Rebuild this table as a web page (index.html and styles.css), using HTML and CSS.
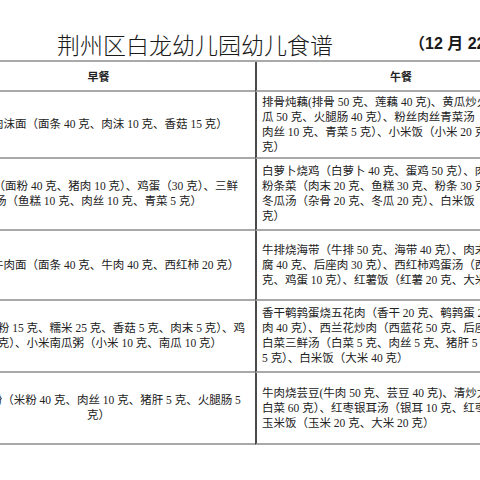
FILE: index.html
```html
<!DOCTYPE html>
<html lang="zh-CN">
<head>
<meta charset="utf-8">
<title>荆州区白龙幼儿园幼儿食谱</title>
<link rel="stylesheet" href="styles.css">
</head>
<body>
<div class="sheet">
  <div class="head">
    <span class="title">荆州区白龙幼儿园幼儿食谱</span>
    <span class="date">（12 月 22 日—12 月 26 日）</span>
  </div>
  <div class="menu">
    <div class="cell l th">早餐</div>
    <div class="cell r th">午餐</div>

    <div class="cell l">
      <span class="ln">香菇肉沫面（面条 40 克、肉沫 10 克、香菇 15 克）</span>
    </div>
    <div class="cell r">
      <span class="ln">排骨炖藕(排骨 50 克、莲藕 40 克)、黄瓜炒火腿肠（黄</span>
      <span class="ln">瓜 50 克、火腿肠 40 克）、粉丝肉丝青菜汤（粉丝 10 克、</span>
      <span class="ln">肉丝 10 克、青菜 5 克）、小米饭（小米 20 克、大米 20</span>
      <span class="ln">克）</span>
    </div>

    <div class="cell l">
      <span class="ln">鲜肉包（面粉 40 克、猪肉 10 克）、鸡蛋（30 克）、三鲜</span>
      <span class="ln">汤（鱼糕 10 克、肉丝 10 克、青菜 5 克）</span>
    </div>
    <div class="cell r">
      <span class="ln">白萝卜烧鸡（白萝卜 40 克、蛋鸡 50 克）、肉末</span>
      <span class="ln">粉条菜（肉末 20 克、鱼糕 30 克、粉条 30 克）、</span>
      <span class="ln">冬瓜汤（杂骨 20 克、冬瓜 20 克）、白米饭（大米 40</span>
      <span class="ln">克）</span>
    </div>

    <div class="cell l">
      <span class="ln">西红柿牛肉面（面条 40 克、牛肉 40 克、西红柿 20 克）</span>
    </div>
    <div class="cell r">
      <span class="ln">牛排烧海带（牛排 50 克、海带 40 克）、肉末豆</span>
      <span class="ln">腐 40 克、后座肉 30 克）、西红柿鸡蛋汤（西红柿 20</span>
      <span class="ln">克、鸡蛋 10 克）、红薯饭（红薯 20 克、大米 20 克）</span>
    </div>

    <div class="cell l">
      <span class="ln">烧麦（米粉 15 克、糯米 25 克、香菇 5 克、肉末 5 克）、鸡</span>
      <span class="ln">蛋 5 克）、小米南瓜粥（小米 10 克、南瓜 10 克）</span>
    </div>
    <div class="cell r">
      <span class="ln">香干鹌鹑蛋烧五花肉（香干 20 克、鹌鹑蛋 20 克、五花</span>
      <span class="ln">肉 40 克）、西兰花炒肉（西蓝花 50 克、后座肉 10 克）、</span>
      <span class="ln">白菜三鲜汤（白菜 5 克、肉丝 5 克、猪肝 5 克、虾皮</span>
      <span class="ln">5 克）、白米饭（大米 40 克）</span>
    </div>

    <div class="cell l">
      <span class="ln">猪肝米粉（米粉 40 克、肉丝 10 克、猪肝 5 克、火腿肠 5</span>
      <span class="ln">克）</span>
    </div>
    <div class="cell r">
      <span class="ln">牛肉烧芸豆(牛肉 50 克、芸豆 40 克)、清炒大白菜（大</span>
      <span class="ln">白菜 60 克）、红枣银耳汤（银耳 10 克、红枣 5 克）、</span>
      <span class="ln">玉米饭（玉米 20 克、大米 20 克）</span>
    </div>
  </div>
</div>
</body>
</html>
```
FILE: styles.css
```css
html, body {
  margin: 0;
  padding: 0;
  background: #ffffff;
}

.sheet {
  width: 480px;
  height: 480px;
  overflow: hidden;
  background: #ffffff;
  color: #222222;
  font-family: "Liberation Serif", "Noto Sans CJK SC", serif;
}

.head {
  height: 60px;
  box-sizing: border-box;
  padding-bottom: 2px;
  display: flex;
  align-items: flex-end;
  white-space: nowrap;
}

.title {
  margin-left: 57px;
  font-family: "Noto Sans CJK SC", sans-serif;
  font-weight: 300;
  font-size: 23px;
  line-height: 28px;
  color: #1a1a1a;
}

.date {
  margin-left: 76px;
  font-family: "Liberation Sans", "Noto Sans CJK SC", sans-serif;
  font-weight: bold;
  font-size: 16px;
  line-height: 28px;
  color: #1a1a1a;
}

.menu {
  display: grid;
  grid-template-columns: 313px 290px;
  grid-template-rows: 30px 67px 72px 70px 72px 72px;
  width: 603px;
  margin-left: -58px;
  border-top: 2px solid #a9a9a9;
}

.cell {
  box-sizing: border-box;
  border-bottom: 2px solid #a9a9a9;
  display: flex;
  flex-direction: column;
  justify-content: center;
  font-size: 11.5px;
  line-height: 15px;
  white-space: nowrap;
  min-width: 0;
}

.cell.l {
  align-items: center;
  text-align: center;
}

.cell.r {
  border-left: 2px solid #4a4a4a;
  padding-left: 5px;
  align-items: flex-start;
}

.cell.th {
  align-items: center;
  font-family: "Noto Sans CJK SC", sans-serif;
  font-weight: bold;
  font-size: 11px;
  padding-left: 0;
}

.ln {
  display: block;
}
```
